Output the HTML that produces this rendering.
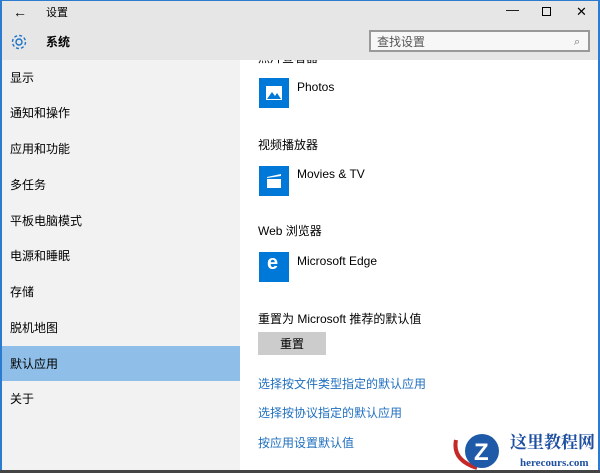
<!DOCTYPE html><html><head><meta charset="utf-8"><style>
*{margin:0;padding:0;box-sizing:border-box}
body{width:600px;height:473px;overflow:hidden;position:relative;background:#fff;font-family:"Liberation Sans","Noto Sans CJK SC",sans-serif;font-size:12px;color:#000}
.a{position:absolute}
.top{left:0;top:0;width:600px;height:60px;background:#e6e6e6;z-index:1}
.side{left:0;top:60px;width:240px;height:413px;background:#f2f2f2}
.it{position:absolute;left:10px;font-size:12px;line-height:16px}
.sel{left:0;top:346px;width:240px;height:35px;background:#8fbfe8}
.tile{position:absolute;left:259px;width:30px;height:30px;background:#0078d7}
.t{position:absolute;font-size:12px;line-height:16px;z-index:2}
.lk{position:absolute;left:258px;color:#1f6fbf;font-size:12px;line-height:16px}
</style></head><body>
<div class="a top"></div>
<div class="a side"></div>
<div class="a" style="left:0;top:0;width:2px;height:473px;background:#2b7bd0;z-index:3"></div>
<div class="a" style="right:0;top:0;width:2px;height:473px;background:#2b7bd0;z-index:3"></div>
<div class="a" style="left:0;top:0;width:600px;height:1px;background:#2b7bd0;z-index:3"></div>
<div class="a" style="left:0;top:470px;width:600px;height:3px;background:#444;z-index:3"></div>
<div class="t" style="left:13px;top:4px;font-size:14px">←</div>
<div class="t" style="left:46px;top:5px;font-size:11px">设置</div>
<div class="t" style="left:506px;top:2px;font-size:13px">—</div>
<div class="a" style="left:542px;top:7px;width:9px;height:9px;border:1px solid #000;z-index:2"></div>
<div class="t" style="left:576px;top:4px;font-size:13px">✕</div>
<svg class="a" style="left:9px;top:32px;z-index:2" width="20" height="20" viewBox="0 0 20 20"><circle cx="10" cy="10" r="3" fill="none" stroke="#1e73c8" stroke-width="1.4"/><circle cx="10" cy="10" r="6.5" fill="none" stroke="#1e73c8" stroke-width="1.4" stroke-dasharray="3 2.1"/></svg>
<div class="t" style="left:46px;top:34px;font-weight:bold">系统</div>
<div class="a" style="left:369px;top:30px;width:221px;height:22px;border:2px solid #999;background:#f7f7f7;z-index:2"></div>
<div class="t" style="left:377px;top:34px;color:#555">查找设置</div>
<div class="t" style="left:574px;top:34px;color:#777;font-size:11px">⌕</div>
<div class="a sel"></div>
<div class="it" style="top:70px">显示</div>
<div class="it" style="top:105px">通知和操作</div>
<div class="it" style="top:141px">应用和功能</div>
<div class="it" style="top:177px">多任务</div>
<div class="it" style="top:213px">平板电脑模式</div>
<div class="it" style="top:248px">电源和睡眠</div>
<div class="it" style="top:284px">存储</div>
<div class="it" style="top:320px">脱机地图</div>
<div class="it" style="top:356px">默认应用</div>
<div class="it" style="top:391px">关于</div>
<div class="a" style="left:258px;top:50px;font-size:12px;line-height:16px">照片查看器</div>
<div class="tile" style="top:78px"><svg width="30" height="30"><rect x="7" y="8" width="16" height="14" fill="#fff"/><path d="M8 21 L13 14 L16 18 L18 15 L22 21Z" fill="#0078d7"/></svg></div>
<div class="t" style="left:297px;top:79px">Photos</div>
<div class="t" style="left:258px;top:137px">视频播放器</div>
<div class="tile" style="top:166px"><svg width="30" height="30"><rect x="8" y="13" width="14" height="9" fill="#fff"/><path d="M8 11 L22 8 L22 10 L8 12Z" fill="#fff"/></svg></div>
<div class="t" style="left:297px;top:166px">Movies &amp; TV</div>
<div class="t" style="left:258px;top:223px">Web 浏览器</div>
<div class="tile" style="top:252px"><div class="t" style="left:8px;top:3px;color:#fff;font-size:20px;font-weight:bold">e</div></div>
<div class="t" style="left:297px;top:253px">Microsoft Edge</div>
<div class="t" style="left:258px;top:311px">重置为 Microsoft 推荐的默认值</div>
<div class="a" style="left:258px;top:332px;width:68px;height:23px;background:#ccc"></div>
<div class="t" style="left:280px;top:336px">重置</div>
<div class="lk" style="top:376px">选择按文件类型指定的默认应用</div>
<div class="lk" style="top:405px">选择按协议指定的默认应用</div>
<div class="lk" style="top:435px">按应用设置默认值</div>
<svg class="a" style="left:452px;top:430px" width="60" height="40"><path d="M4 10 Q0 30 25 38" stroke="#c62828" stroke-width="4" fill="none"/><circle cx="30" cy="21" r="17" fill="#1e5aa8"/><text x="22" y="30" fill="#fff" font-size="24" font-weight="bold" font-family="Liberation Sans">Z</text></svg>
<div class="t" style="left:510px;top:433px;color:#1e4fa0;font-size:17px;font-weight:bold;font-family:'Noto Serif CJK SC',serif">这里教程网</div>
<div class="t" style="left:520px;top:455px;color:#1e4fa0;font-size:11px;font-weight:bold;font-family:'Liberation Serif',serif">herecours.com</div>
</body></html>
